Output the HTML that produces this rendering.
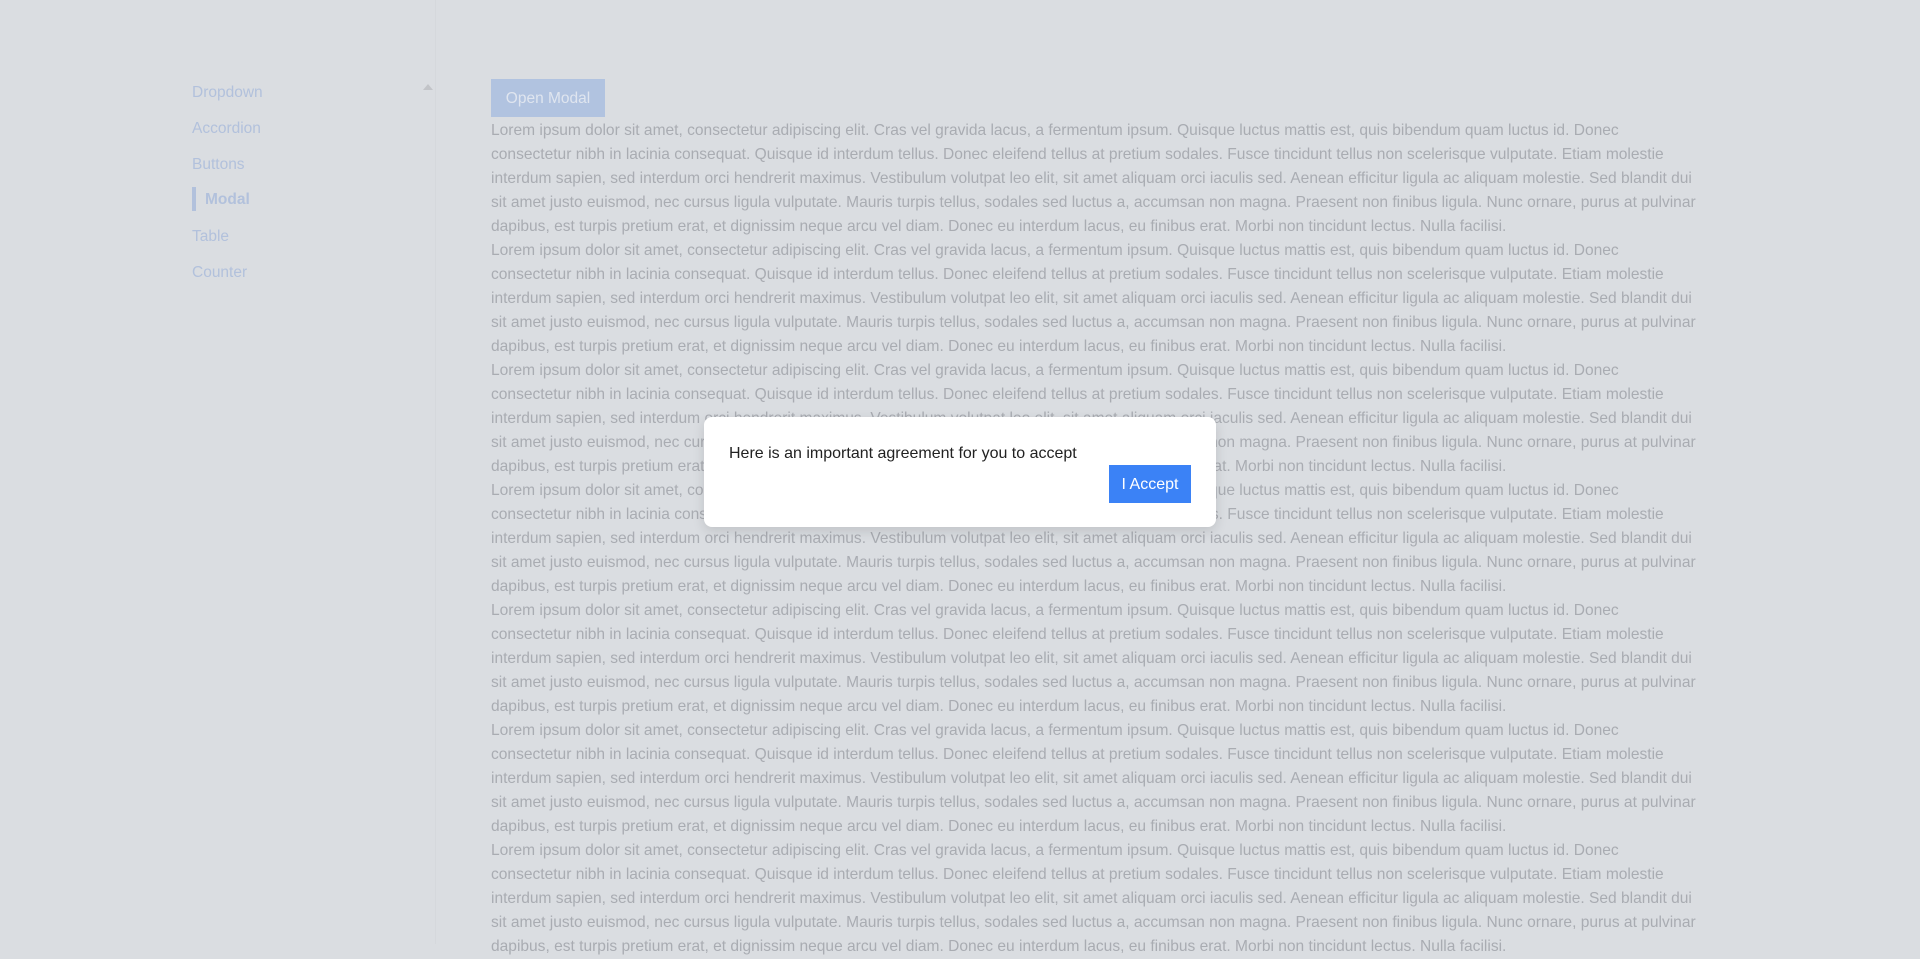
<!DOCTYPE html>
<html><head><meta charset="utf-8"><style>
html,body{margin:0;padding:0;width:1920px;height:944px;overflow:hidden;background:#dadde1;font-family:"Liberation Sans",sans-serif;}
.side{position:absolute;left:0;top:0;width:435px;height:944px;border-right:1px solid #d5d8dc;}
.side a{position:absolute;left:192px;font-size:15.5px;color:#b2c1dc;text-decoration:none;}
.caret{position:absolute;left:423px;top:84px;width:0;height:0;border-left:5px solid transparent;border-right:5px solid transparent;border-bottom:6px solid #c2c4c8;}
.btn{position:absolute;left:491px;top:79px;width:114px;height:38px;background:#b1c3e0;color:#dfe5ef;font-size:15.5px;line-height:40px;text-align:center;}
.txt{position:absolute;left:491px;top:119px;width:1300px;color:#a9acb2;font-size:15.55px;line-height:24px;}
.txt div{white-space:nowrap;}
.modal{position:absolute;left:704px;top:417px;width:512px;height:110px;background:#fff;border-radius:8px;box-shadow:0 4px 12px rgba(0,0,0,.12);}
.modal p{position:absolute;left:25px;top:28px;margin:0;font-size:16px;color:#222;}
.acc{position:absolute;left:405px;top:48px;width:82px;height:38px;background:#3b82f6;color:#fff;font-size:16px;line-height:39px;text-align:center;}
</style></head><body>
<div class="side">
<a style="top:84px">Dropdown</a>
<a style="top:120px">Accordion</a>
<a style="top:156px">Buttons</a>
<div style="position:absolute;left:192px;top:187px;width:4px;height:24px;background:#b2c1dc"></div>
<a style="top:191px;left:205px;font-weight:bold">Modal</a>
<a style="top:228px">Table</a>
<a style="top:264px">Counter</a>
<div class="caret"></div>
</div>
<div class="btn">Open Modal</div>
<div class="txt" id="t"></div>
<div class="modal"><p>Here is an important agreement for you to accept</p><div class="acc">I Accept</div></div>
<script>
var L=["Lorem ipsum dolor sit amet, consectetur adipiscing elit. Cras vel gravida lacus, a fermentum ipsum. Quisque luctus mattis est, quis bibendum quam luctus id. Donec",
"consectetur nibh in lacinia consequat. Quisque id interdum tellus. Donec eleifend tellus at pretium sodales. Fusce tincidunt tellus non scelerisque vulputate. Etiam molestie",
"interdum sapien, sed interdum orci hendrerit maximus. Vestibulum volutpat leo elit, sit amet aliquam orci iaculis sed. Aenean efficitur ligula ac aliquam molestie. Sed blandit dui",
"sit amet justo euismod, nec cursus ligula vulputate. Mauris turpis tellus, sodales sed luctus a, accumsan non magna. Praesent non finibus ligula. Nunc ornare, purus at pulvinar",
"dapibus, est turpis pretium erat, et dignissim neque arcu vel diam. Donec eu interdum lacus, eu finibus erat. Morbi non tincidunt lectus. Nulla facilisi."];
var h="";for(var i=0;i<7;i++)for(var j=0;j<5;j++)h+="<div>"+L[j]+"</div>";
document.getElementById("t").innerHTML=h;
</script>
</body></html>
